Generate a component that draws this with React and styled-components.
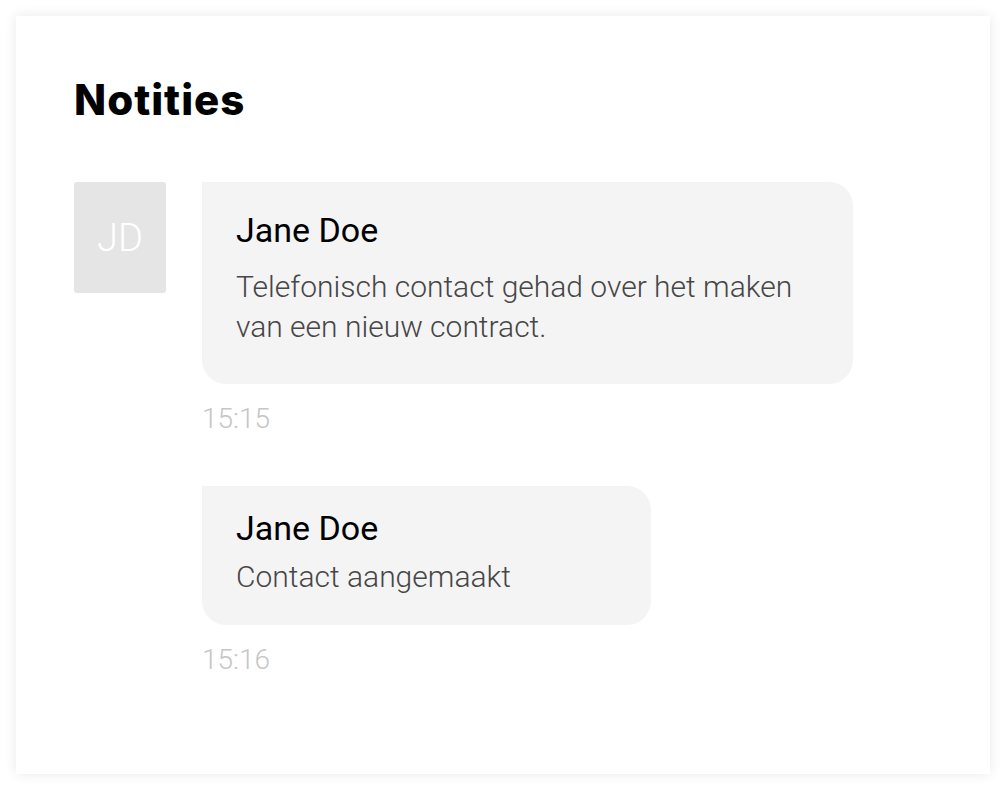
import React from "react";
import styled, { createGlobalStyle } from "styled-components";

const GlobalStyle = createGlobalStyle`
  html, body {
    margin: 0;
    padding: 0;
    background: #ffffff;
  }
  body {
    padding: 16px;
    font-family: Roboto, "Liberation Sans", sans-serif;
  }
  * { box-sizing: border-box; }
`;

const Card = styled.section`
  background: #ffffff;
  box-shadow: 0 0 12px rgba(0, 0, 0, 0.09);
  padding: 59px 58px 97px 58px;
`;

const Title = styled.h1`
  margin: 0 0 57px 0;
  font-family: Inter, "Open Sans", sans-serif;
  font-weight: 800;
  font-size: 42px;
  line-height: 50px;
  letter-spacing: 1px;
  color: #000000;
`;

const NoteList = styled.div`
  display: flex;
  flex-direction: column;
  gap: 50px;
`;

const NoteRow = styled.div`
  display: grid;
  grid-template-columns: 92px 1fr;
  column-gap: 36px;
  align-items: start;
`;

const Avatar = styled.div`
  width: 92px;
  height: 111px;
  border-radius: 3px;
  background: #e5e5e5;
  color: #ffffff;
  display: flex;
  align-items: center;
  justify-content: center;
  font-family: Roboto, sans-serif;
  font-weight: 300;
  font-size: 38px;
`;

const NoteBody = styled.div`
  grid-column: 2;
  display: flex;
  flex-direction: column;
  align-items: flex-start;
`;

const Bubble = styled.div`
  background: #f4f4f4;
  border-radius: 0 24px 24px 24px;
  width: fit-content;
  min-width: 449px;
  max-width: 651px;
  padding: ${(p) => (p.$roomy ? "28px 34px 37px" : "22px 34px 28px")};
`;

const Author = styled.div`
  font-family: Roboto, sans-serif;
  font-weight: 400;
  font-size: 34px;
  line-height: 40px;
  color: #000000;
`;

const Text = styled.p`
  margin: ${(p) => (p.$roomy ? "17px" : "9px")} 0 0 0;
  font-family: Roboto, sans-serif;
  font-weight: 300;
  font-size: 30px;
  line-height: 40px;
  color: #464646;
`;

const Time = styled.div`
  margin-top: 18px;
  font-family: Roboto, sans-serif;
  font-weight: 300;
  font-size: 28px;
  line-height: 34px;
  color: #c6c6c6;
`;

const notes = [
  {
    id: 1,
    initials: "JD",
    author: "Jane Doe",
    text: "Telefonisch contact gehad over het maken van een nieuw contract.",
    time: "15:15",
    showAvatar: true,
    roomy: true,
  },
  {
    id: 2,
    initials: "JD",
    author: "Jane Doe",
    text: "Contact aangemaakt",
    time: "15:16",
    showAvatar: false,
    roomy: false,
  },
];

export default function App() {
  return (
    <>
      <GlobalStyle />
      <Card>
        <Title>Notities</Title>
        <NoteList>
          {notes.map((n) => (
            <NoteRow key={n.id}>
              {n.showAvatar && <Avatar>{n.initials}</Avatar>}
              <NoteBody>
                <Bubble $roomy={n.roomy}>
                  <Author>{n.author}</Author>
                  <Text $roomy={n.roomy}>{n.text}</Text>
                </Bubble>
                <Time>{n.time}</Time>
              </NoteBody>
            </NoteRow>
          ))}
        </NoteList>
      </Card>
    </>
  );
}
